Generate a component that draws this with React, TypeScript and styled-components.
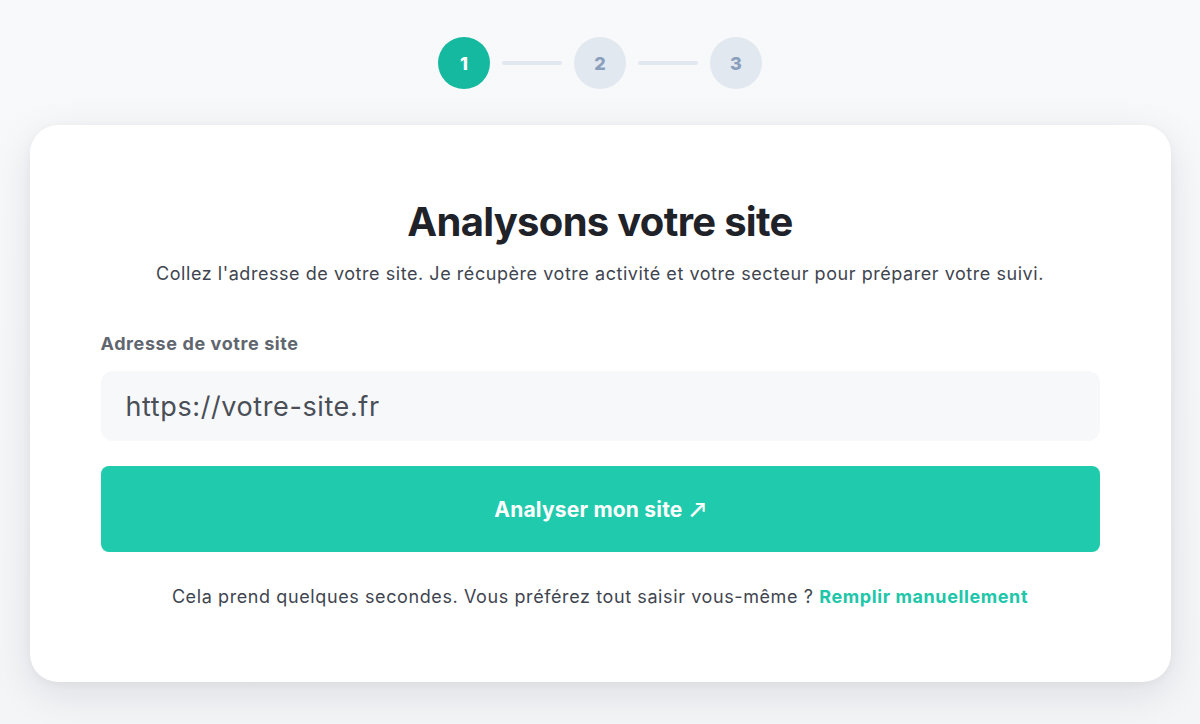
import React from "react";
import styled, { createGlobalStyle } from "styled-components";

const Global = createGlobalStyle`
  html, body { margin: 0; padding: 0; }
  body {
    background: #f6f7f9;
    font-family: "Inter", "Lato", sans-serif;
    -webkit-font-smoothing: antialiased;
  }
  * { box-sizing: border-box; }
`;

const Page = styled.div`
  min-height: 724px;
  display: flex;
  flex-direction: column;
  align-items: center;
  padding: 37px 29px 40px;
  background: linear-gradient(#f8f9fb 0, #f4f5f7 724px);
`;

const Stepper = styled.div`
  display: flex;
  align-items: center;
  gap: 12px;
  margin-bottom: 36px;
`;

const Step = styled.div<{ $active?: boolean }>`
  width: 52px;
  height: 52px;
  border-radius: 50%;
  display: flex;
  align-items: center;
  justify-content: center;
  font-weight: 800;
  font-size: 18px;
  background: ${(p) => (p.$active ? "#15b9a0" : "#e2e8f0")};
  color: ${(p) => (p.$active ? "#ffffff" : "#8a9fbc")};
`;

const Line = styled.div`
  width: 60px;
  height: 4px;
  border-radius: 2px;
  background: #e2e8f0;
`;

const Card = styled.div`
  width: 1141px;
  background: #ffffff;
  border-radius: 28px;
  box-shadow: 0 12px 40px rgba(15, 23, 42, 0.1), 0 2px 10px rgba(15, 23, 42, 0.04);
  padding: 71px 71px 72px;
  display: flex;
  flex-direction: column;
`;

const Title = styled.h1`
  margin: 0;
  text-align: center;
  font-size: 40px;
  line-height: 52px;
  font-weight: 700;
  color: #1f2329;
  letter-spacing: -0.7px;
`;

const Subtitle = styled.p`
  margin: 13px 0 0;
  text-align: center;
  font-size: 18px;
  line-height: 26px;
  color: #3f4550;
  letter-spacing: 0.55px;
`;

const Label = styled.label`
  margin-top: 45px;
  font-size: 18px;
  line-height: 24px;
  font-weight: 700;
  color: #5f6670;
  letter-spacing: 0.6px;
`;

const Input = styled.div`
  margin-top: 15px;
  height: 70px;
  border-radius: 12px;
  background: #f7f8fa;
  display: flex;
  align-items: center;
  padding: 0 25px;
  font-size: 27px;
  color: #4a4f57;
  letter-spacing: 0.6px;
`;

const Button = styled.button`
  margin-top: 25px;
  height: 86px;
  border: none;
  border-radius: 8px;
  background: #20cbad;
  color: #ffffff;
  font-family: inherit;
  font-size: 21px;
  font-weight: 700;
  letter-spacing: 0.2px;
  cursor: pointer;
`;

const Arrow = styled.span`
  font-family: "Lato", sans-serif;
  font-weight: 700;
  margin-left: 2px;
`;

const Footer = styled.p`
  margin: 32px 0 0;
  text-align: center;
  font-size: 18px;
  line-height: 26px;
  color: #3f4550;
  letter-spacing: 0.6px;
`;

const Link = styled.a`
  color: #20c6a9;
  font-weight: 700;
  text-decoration: none;
`;

export default function App() {
  return (
    <>
      <Global />
      <Page>
        <Stepper>
          <Step $active>1</Step>
          <Line />
          <Step>2</Step>
          <Line />
          <Step>3</Step>
        </Stepper>
        <Card>
          <Title>Analysons votre site</Title>
          <Subtitle>
            Collez l'adresse de votre site. Je récupère votre activité et votre secteur pour préparer votre suivi.
          </Subtitle>
          <Label>Adresse de votre site</Label>
          <Input>https://votre-site.fr</Input>
          <Button>
            Analyser mon site <Arrow>↗</Arrow>
          </Button>
          <Footer>
            Cela prend quelques secondes. Vous préférez tout saisir vous-même ?{" "}
            <Link href="#">Remplir manuellement</Link>
          </Footer>
        </Card>
      </Page>
    </>
  );
}
